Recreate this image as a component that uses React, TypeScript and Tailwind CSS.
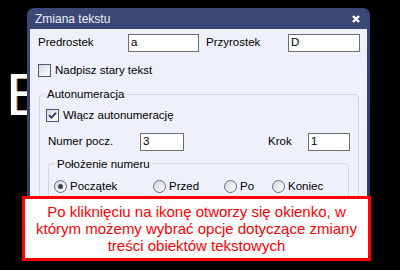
import type { ReactNode } from 'react'

// ─── PARTS ───────────────────────────────────────────────────────────────────

function Field({ value, width }: { value: string; width: string }) {
  return (
    <div className={`${width} h-[18px] bg-white border border-[#6e6e6e] pl-[2px] flex items-center text-black`}>
      {value}
    </div>
  )
}

function Check({ checked }: { checked?: boolean }) {
  return (
    <div className="w-[13px] h-[13px] shrink-0 border border-[#4c5a7a] bg-gradient-to-br from-[#d6d9e2] to-white flex items-center justify-center">
      {checked && (
        <svg width="9" height="9" viewBox="0 0 9 9">
          <path d="M1 4.2 L3.4 6.6 L8 1.8" fill="none" stroke="#2c3a5c" strokeWidth="1.8" />
        </svg>
      )}
    </div>
  )
}

function Radio({ label, checked }: { label: string; checked?: boolean }) {
  return (
    <div className="flex items-center">
      <div className="w-[13px] h-[13px] shrink-0 rounded-full border border-[#5e6c8c] bg-gradient-to-br from-[#d3d6df] to-white flex items-center justify-center">
        {checked && <div className="w-[5px] h-[5px] rounded-full bg-[#3a3f4e]" />}
      </div>
      <span className="ml-[3px]">{label}</span>
    </div>
  )
}

function Group({ title, className, children }: { title: string; className: string; children: ReactNode }) {
  return (
    <fieldset className={`border border-[#d3d5e0] rounded-[4px] ${className}`}>
      <legend className="px-[2px] leading-[14px]">{title}</legend>
      {children}
    </fieldset>
  )
}

// ─── PAGE ─────────────────────────────────────────────────────────────────────

export default function App() {
  return (
    <div className="relative w-[400px] h-[270px] bg-black overflow-hidden flex font-['Liberation_Sans',Arial,sans-serif]">

      {/* LITERA W TLE (częściowo zasłonięta przez okno) */}
      <div className="w-[27px] shrink-0 overflow-hidden">
        <div className="pt-[65px] pl-[6px] text-[60px] leading-[60px] text-white whitespace-nowrap [text-shadow:1px_0_#c56a12]">E</div>
      </div>

      {/* OKNO */}
      <div className="mt-[8px] w-[343px] h-[250px] shrink-0 rounded-t-[7px] bg-gradient-to-b from-[#3b4878] to-[#2c3866] px-[3px] pb-[3px] flex flex-col">
        <div className="h-[21px] flex items-center justify-between pl-[5px] pr-[7px] text-[12px] text-[#eef0f8]">
          <span>Zmiana tekstu</span>
          <svg width="8" height="8" viewBox="0 0 8 8">
            <path d="M1 1 L7 7 M7 1 L1 7" stroke="white" strokeWidth="2.4" />
          </svg>
        </div>

        <div className="flex-1 bg-[#eef0fc] text-[11.5px] text-black flex flex-col">
          {/* PRZEDROSTEK / PRZYROSTEK */}
          <div className="mt-[5px] pl-[8px] flex items-center">
            <span className="w-[90px]">Predrostek</span>
            <Field value="a" width="w-[71px]" />
            <span className="ml-[7px] w-[82px]">Przyrostek</span>
            <Field value="D" width="w-[72px]" />
          </div>

          <div className="mt-[10px] pl-[8px] flex items-center">
            <Check />
            <span className="ml-[4px]">Nadpisz stary tekst</span>
          </div>

          {/* AUTONUMERACJA */}
          <Group title="Autonumeracja" className="mt-[8px] ml-[9px] w-[320px] pl-[5px] pb-[10px]">
            <div className="mt-[6px] pl-[1px] flex items-center">
              <Check checked />
              <span className="ml-[4px]">Włącz autonumerację</span>
            </div>

            <div className="mt-[8px] pl-[3px] flex items-center">
              <span className="w-[92px]">Numer pocz.</span>
              <Field value="3" width="w-[44px]" />
              <span className="ml-[84px] w-[40px]">Krok</span>
              <Field value="1" width="w-[42px]" />
            </div>

            <Group title="Położenie numeru" className="mt-[6px] ml-[3px] w-[301px] pl-[6px] pb-[11px]">
              <div className="mt-[7px] -ml-[1px] flex items-center">
                <div className="w-[99px]"><Radio label="Początek" checked /></div>
                <div className="w-[71px]"><Radio label="Przed" /></div>
                <div className="w-[48px]"><Radio label="Po" /></div>
                <Radio label="Koniec" />
              </div>
            </Group>
          </Group>
        </div>
      </div>

      {/* OPIS */}
      <div className="absolute left-[22px] top-[196px] w-[349px] h-[65px] bg-white border-[3px] border-[#ff0000] flex items-center justify-center text-center text-[15px] leading-[17px] text-[#ff0000]">
        <p>
          Po kliknięciu na ikonę otworzy się okienko, w<br />
          którym możemy wybrać opcje dotyczące zmiany<br />
          treści obiektów tekstowych
        </p>
      </div>
    </div>
  )
}
